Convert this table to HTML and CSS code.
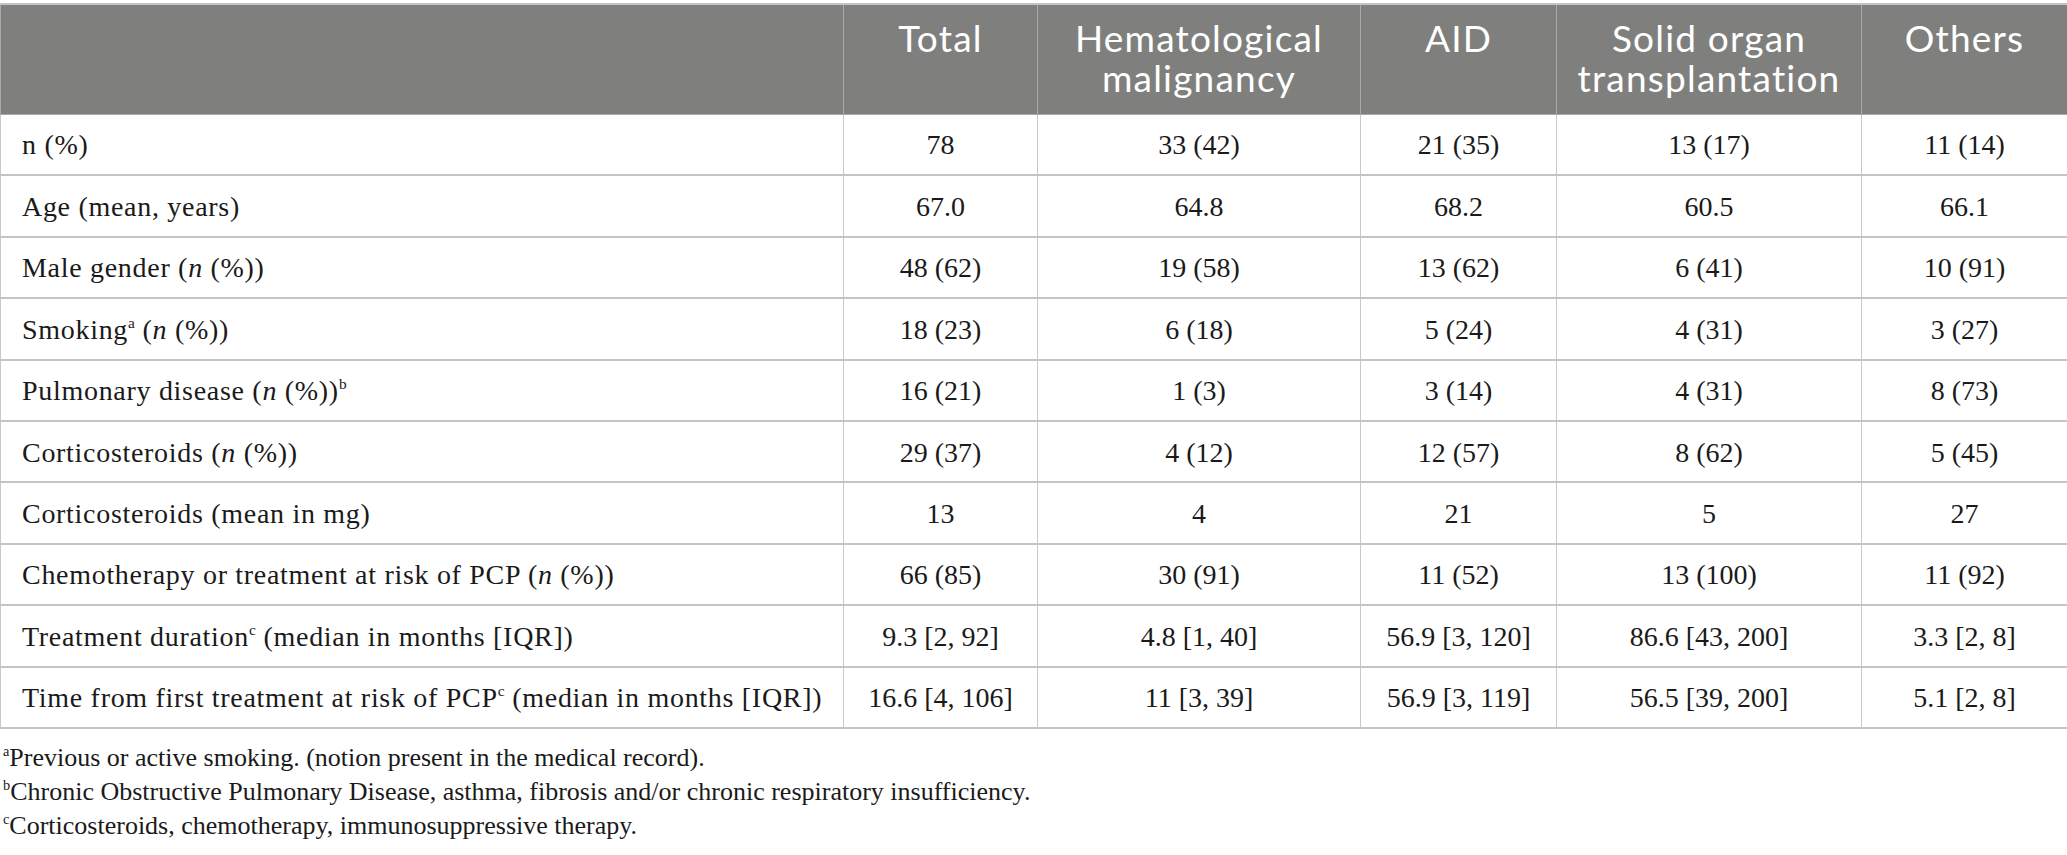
FILE: index.html
```html
<!DOCTYPE html>
<html lang="en">
<head>
<meta charset="utf-8">
<title>Table</title>
<link rel="stylesheet" href="styles.css">
</head>
<body>
<table class="data">
  <colgroup>
    <col class="c-label">
    <col class="c-total">
    <col class="c-hema">
    <col class="c-aid">
    <col class="c-solid">
    <col class="c-other">
  </colgroup>
  <thead>
    <tr>
      <th></th>
      <th>Total</th>
      <th>Hematological malignancy</th>
      <th>AID</th>
      <th>Solid organ transplantation</th>
      <th>Others</th>
    </tr>
  </thead>
  <tbody>
    <tr><td>n (%)</td><td>78</td><td>33 (42)</td><td>21 (35)</td><td>13 (17)</td><td>11 (14)</td></tr>
    <tr><td>Age (mean, years)</td><td>67.0</td><td>64.8</td><td>68.2</td><td>60.5</td><td>66.1</td></tr>
    <tr><td>Male gender (<i>n</i> (%))</td><td>48 (62)</td><td>19 (58)</td><td>13 (62)</td><td>6 (41)</td><td>10 (91)</td></tr>
    <tr><td>Smoking<sup>a</sup> (<i>n</i> (%))</td><td>18 (23)</td><td>6 (18)</td><td>5 (24)</td><td>4 (31)</td><td>3 (27)</td></tr>
    <tr><td>Pulmonary disease (<i>n</i> (%))<sup>b</sup></td><td>16 (21)</td><td>1 (3)</td><td>3 (14)</td><td>4 (31)</td><td>8 (73)</td></tr>
    <tr><td>Corticosteroids (<i>n</i> (%))</td><td>29 (37)</td><td>4 (12)</td><td>12 (57)</td><td>8 (62)</td><td>5 (45)</td></tr>
    <tr><td>Corticosteroids (mean in mg)</td><td>13</td><td>4</td><td>21</td><td>5</td><td>27</td></tr>
    <tr><td>Chemotherapy or treatment at risk of PCP (<i>n</i> (%))</td><td>66 (85)</td><td>30 (91)</td><td>11 (52)</td><td>13 (100)</td><td>11 (92)</td></tr>
    <tr><td>Treatment duration<sup>c</sup> (median in months [IQR])</td><td>9.3 [2, 92]</td><td>4.8 [1, 40]</td><td>56.9 [3, 120]</td><td>86.6 [43, 200]</td><td>3.3 [2, 8]</td></tr>
    <tr><td>Time from first treatment at risk of PCP<sup>c</sup> (median in months [IQR])</td><td>16.6 [4, 106]</td><td>11 [3, 39]</td><td>56.9 [3, 119]</td><td>56.5 [39, 200]</td><td>5.1 [2, 8]</td></tr>
  </tbody>
</table>
<div class="notes">
  <p><sup>a</sup>Previous or active smoking. (notion present in the medical record).</p>
  <p><sup>b</sup>Chronic Obstructive Pulmonary Disease, asthma, fibrosis and/or chronic respiratory insufficiency.</p>
  <p><sup>c</sup>Corticosteroids, chemotherapy, immunosuppressive therapy.</p>
</div>
</body>
</html>
```

FILE: styles.css
```css
html, body {
  margin: 0;
  padding: 0;
  background: #ffffff;
}

body {
  font-family: "Liberation Serif", "Times New Roman", serif;
  color: #1a1a1a;
}

.data {
  width: 2067px;
  margin-top: 3px;
  border-collapse: collapse;
  table-layout: fixed;
}

.c-label { width: 843px; }
.c-total { width: 194px; }
.c-hema { width: 323px; }
.c-aid { width: 196px; }
.c-solid { width: 305px; }
.c-other { width: 206px; }

.data th {
  height: 110px;
  box-sizing: border-box;
  padding: 13px 6px 0;
  vertical-align: top;
  background: #7f807e;
  color: #ffffff;
  font-family: Lato, "Open Sans", sans-serif;
  font-weight: 400;
  font-size: 37px;
  letter-spacing: 1.2px;
  line-height: 40px;
  text-align: center;
  border: 1px solid #a9aaa8;
  border-top: 2px solid #c4c4c4;
}

.data td {
  height: 61.4px;
  box-sizing: border-box;
  padding: 2px 10px 0;
  font-size: 28px;
  text-align: center;
  vertical-align: middle;
  border-left: 1px solid #c8c8c8;
  border-right: 1px solid #c8c8c8;
  border-bottom: 2px solid #c4c4c4;
}

.data td:first-child {
  text-align: left;
  padding-left: 21px;
  letter-spacing: 0.7px;
}

.data sup,
.notes sup {
  font-size: 0.55em;
  line-height: 0;
  vertical-align: 0.7em;
  letter-spacing: 0;
}

.notes {
  padding: 12px 3px 0;
  font-size: 26px;
  line-height: 34px;
}

.notes p {
  margin: 0;
}
```
